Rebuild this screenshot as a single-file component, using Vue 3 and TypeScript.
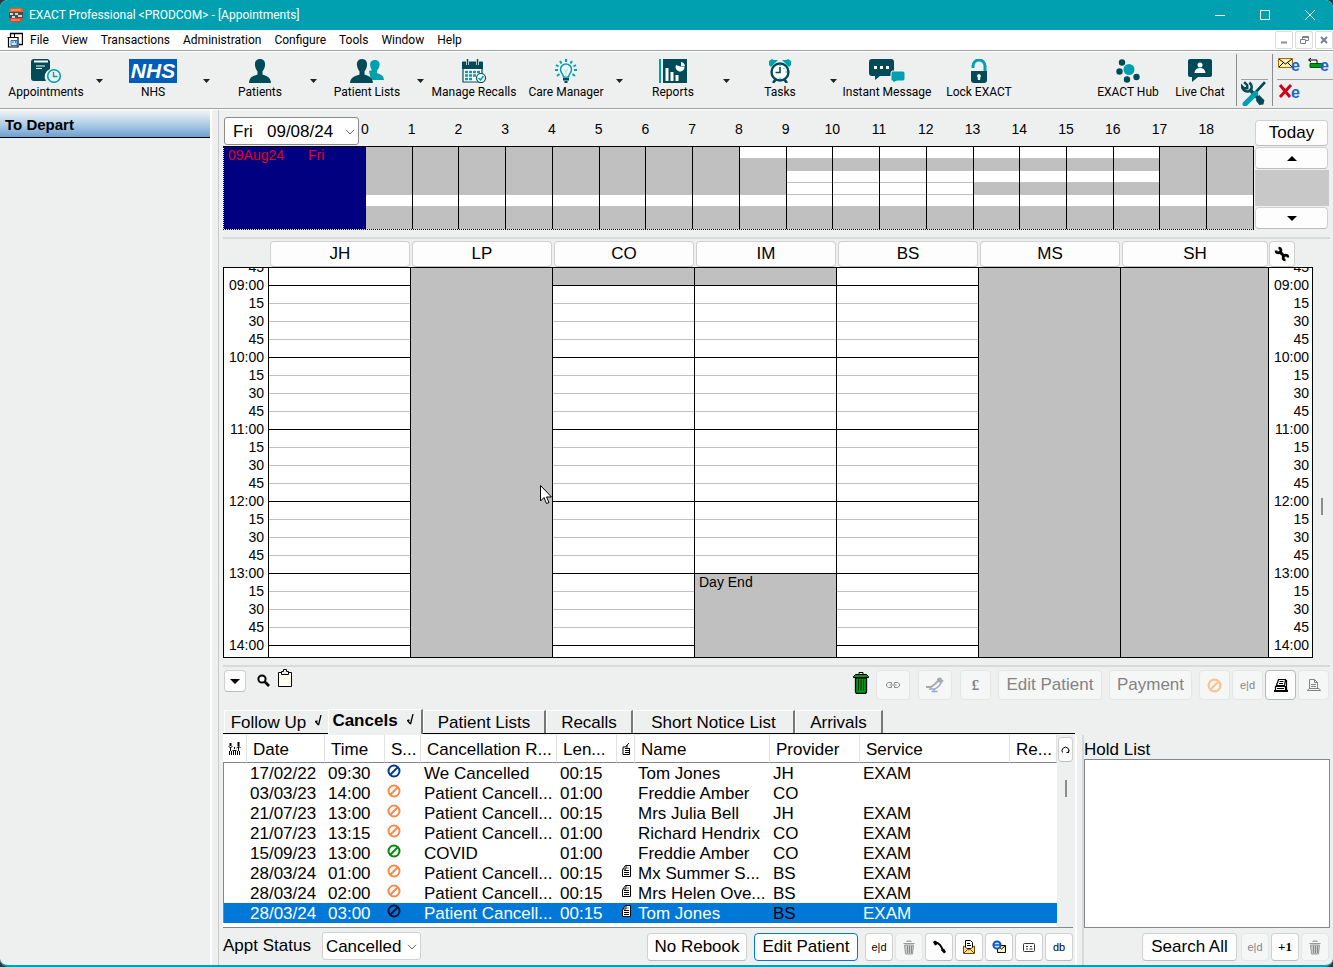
<script setup lang="ts">
import { ref } from 'vue'

interface Tool {
  label: string
  icon: string
  menu?: boolean
}
interface Provider {
  code: string
  from: number
  to: number
  day: [number, number]
}
interface Cancel {
  date: string
  time: string
  tone: string
  reason: string
  length: string
  note: boolean
  name: string
  provider: string
  service: string
}

const menus = ['File', 'View', 'Transactions', 'Administration', 'Configure', 'Tools', 'Window', 'Help']

const tools: Tool[] = [
  { label: 'Appointments', icon: 'book', menu: true },
  { label: 'NHS', icon: 'nhs', menu: true },
  { label: 'Patients', icon: 'person', menu: true },
  { label: 'Patient Lists', icon: 'people', menu: true },
  { label: 'Manage Recalls', icon: 'calendar' },
  { label: 'Care Manager', icon: 'bulb', menu: true },
  { label: 'Reports', icon: 'report', menu: true },
  { label: 'Tasks', icon: 'alarm', menu: true },
  { label: 'Instant Message', icon: 'message' },
  { label: 'Lock EXACT', icon: 'lock' },
]

const hours = Array.from({ length: 19 }, (_, i) => i)

// from/to: first and last open slot in the visible diary; day: open hours in the day overview
const providers: Provider[] = [
  { code: 'JH', from: 0, to: 99, day: [8, 17] },
  { code: 'LP', from: 0, to: 0, day: [0, 0] },
  { code: 'CO', from: 1, to: 99, day: [9, 17] },
  { code: 'IM', from: 1, to: 17, day: [9, 13] },
  { code: 'BS', from: 0, to: 99, day: [0, 24] },
  { code: 'MS', from: 0, to: 0, day: [0, 0] },
  { code: 'SH', from: 0, to: 0, day: [0, 0] },
]

// quarter-hour slots from 08:45; the last one fills what is left of the column
const slots = Array.from({ length: 23 }, (_, i) => i)
const slotLabels = slots.slice(0, 22).map((i) => {
  const minutes = 8 * 60 + 45 + i * 15
  const m = minutes % 60
  return m === 0 ? `${String(minutes / 60).padStart(2, '0')}:00` : String(m)
})

function isOpen(p: Provider, i: number): boolean {
  return i >= p.from && i < p.to
}
function slotClass(p: Provider, i: number) {
  const edge = isOpen(p, i) || isOpen(p, i + 1)
  return { off: !isOpen(p, i), hour: edge && i % 4 === 0 }
}

const tabs = [
  { label: 'Follow Up', tick: true, cls: 't1' },
  { label: 'Cancels', tick: true, cls: 't2' },
  { label: 'Patient Lists', tick: false, cls: 't3' },
  { label: 'Recalls', tick: false, cls: 't4' },
  { label: 'Short Notice List', tick: false, cls: 't5' },
  { label: 'Arrivals', tick: false, cls: 't6' },
]
const activeTab = ref('Cancels')

const cancels: Cancel[] = [
  { date: '17/02/22', time: '09:30', tone: 'navy', reason: 'We Cancelled', length: '00:15', note: false, name: 'Tom Jones', provider: 'JH', service: 'EXAM' },
  { date: '03/03/23', time: '14:00', tone: 'orange', reason: 'Patient Cancell...', length: '01:00', note: false, name: 'Freddie Amber', provider: 'CO', service: '' },
  { date: '21/07/23', time: '13:00', tone: 'orange', reason: 'Patient Cancell...', length: '00:15', note: false, name: 'Mrs Julia Bell', provider: 'JH', service: 'EXAM' },
  { date: '21/07/23', time: '13:15', tone: 'orange', reason: 'Patient Cancell...', length: '01:00', note: false, name: 'Richard Hendrix', provider: 'CO', service: 'EXAM' },
  { date: '15/09/23', time: '13:00', tone: 'green', reason: 'COVID', length: '01:00', note: false, name: 'Freddie Amber', provider: 'CO', service: 'EXAM' },
  { date: '28/03/24', time: '01:00', tone: 'orange', reason: 'Patient Cancell...', length: '00:15', note: true, name: 'Mx Summer S...', provider: 'BS', service: 'EXAM' },
  { date: '28/03/24', time: '02:00', tone: 'orange', reason: 'Patient Cancell...', length: '00:15', note: true, name: 'Mrs Helen Ove...', provider: 'BS', service: 'EXAM' },
  { date: '28/03/24', time: '03:00', tone: 'dark', reason: 'Patient Cancell...', length: '00:15', note: true, name: 'Tom Jones', provider: 'BS', service: 'EXAM' },
]
const selected = ref(7)
</script>

<template>
  <div class="app">
    <svg class="defs" aria-hidden="true">
      <symbol id="i-book" viewBox="0 0 32 24">
        <path d="M4 0h14l2 2v8a8 8 0 0 0-4 12H4a3 3 0 0 1-3-3V3a3 3 0 0 1 3-3z" fill="#004b57" />
        <path d="M4 1.500h14v2H4z" fill="#fff" /><path d="M6 7h9M6 9.500h6" stroke="#fff" />
        <circle cx="24" cy="17" r="6.300" fill="#eef0f0" stroke="#00a0b0" stroke-width="1.600" />
        <path d="M23.500 13v4.500h4" fill="none" stroke="#00a0b0" stroke-width="1.400" />
      </symbol>
      <symbol id="i-person" viewBox="0 0 24 24">
        <path d="M12 0c4 0 5.500 3 5 6.500-.4 3-1.500 4.500-2.500 6v3c3 1.500 8 1.500 8.500 8.500H1c.5-7 5.500-7 8.500-8.500v-3C8.500 11 7.400 9.500 7 6.500 6.500 3 8 0 12 0z" fill="#004b57" />
      </symbol>
      <symbol id="i-people" viewBox="0 0 34 24">
        <path d="M25 1c3.500 0 5 2.500 4.500 5.500-.3 2.500-1.500 4-2.500 5v2.500c3 1.500 6.500 1.500 7 7H21l-2-9 3-1c-1-1-1.500-2-1.800-4.500C19.800 3.500 21 1 25 1z" fill="#00a0b0" />
        <path d="M12 0c4 0 5.500 3 5 6.500-.4 3-1.500 4.500-2.500 6v3c3 1.500 8 1.500 8.500 8.500H0c.5-7 6.500-7 9.500-8.500v-3C8.500 11 7.400 9.500 7 6.500 6.500 3 8 0 12 0z" fill="#004b57" />
      </symbol>
      <symbol id="i-calendar" viewBox="0 0 24 24">
        <path d="M1 3h19v20H1z" fill="#fff" stroke="#004b57" stroke-width="1.200" />
        <path d="M0 3h21v7H0z" fill="#004b57" />
        <path d="M5.500 0v6M15.500 0v6" stroke="#eef0f0" stroke-width="3" /><path d="M5.500 0v6M15.500 0v6" stroke="#004b57" stroke-width="1.500" />
        <path d="M3 13h3M7 13h3M11 13h3M15 13h3M3 16.500h3M7 16.500h3M11 16.500h3M3 20h3M7 20h3" stroke="#00a0b0" stroke-width="2.400" />
        <circle cx="19" cy="19" r="4.500" fill="#fff" stroke="#004b57" stroke-width="1.200" />
        <path d="M16.500 19l2 2 3-4" fill="none" stroke="#00a0b0" stroke-width="1.600" />
      </symbol>
      <symbol id="i-bulb" viewBox="0 0 24 24">
        <path d="M12 0v3M6 2l1.500 2.500M18 2l-1.500 2.500M2 6l2.500 1.500M22 6l-2.500 1.500M1 11h3M20 11h3M3 17l2.500-2M21 17l-2.500-2" stroke="#00a0b0" stroke-width="2" />
        <path d="M9.500 18c0-3-3-4-3-7.500a5.500 5.500 0 0 1 11 0c0 3.500-3 4.500-3 7.500z" fill="#f6ffff" stroke="#00a0b0" stroke-width="1.500" />
        <path d="M10 10l2 3 2-3M12 13v5" fill="none" stroke="#a9dde2" />
        <path d="M9 19h6v2.500H9zM10.500 22h3v2h-3z" fill="#004b57" />
      </symbol>
      <symbol id="i-report" viewBox="0 0 28 24">
        <path d="M1 0v24" stroke="#00a0b0" stroke-width="2" /><path d="M4 0h24v24H4z" fill="#004b57" />
        <path d="M8 22V9M13 22v-9M18 22v-6" stroke="#fff" stroke-width="3" />
        <path d="M21.500 3v4.500H25.500A4.500 4.500 0 1 1 17 6l4.500 1.500z" fill="#fff" /><path d="M22 3a5 5 0 0 1 4 4h-4z" fill="#fff" />
      </symbol>
      <symbol id="i-alarm" viewBox="0 0 24 24">
        <path d="M1 6V2l3-2 2 1 4 0L3 8zM23 6V2l-3-2-2 1-4 0 7 7z" fill="#00a0b0" />
        <path d="M5 24l3-4M19 24l-3-4" stroke="#004b57" stroke-width="2.600" />
        <circle cx="12" cy="13" r="8.500" fill="#fff" stroke="#004b57" stroke-width="2.400" />
        <path d="M12 8v5.500H7.500" fill="none" stroke="#004b57" stroke-width="1.600" />
        <path d="M12 5.500v1.500M19 13h-1.500M12 20v-1.500M16.500 9l-1 1" stroke="#00a0b0" />
      </symbol>
      <symbol id="i-message" viewBox="0 0 36 24">
        <path d="M3 0h19a3 3 0 0 1 3 3v11a3 3 0 0 1-3 3H11l-5 4v-4H3a3 3 0 0 1-3-3V3a3 3 0 0 1 3-3z" fill="#004b57" />
        <path d="M5 7h3v3H5zM11 7h3v3h-3zM17 7h3v3h-3z" fill="#fff" />
        <path d="M23 12h11a2 2 0 0 1 2 2v6a2 2 0 0 1-2 2h-6l-4 2v-2h-2V14z" fill="#00a0b0" stroke="#eef0f0" />
      </symbol>
      <symbol id="i-lock" viewBox="0 0 16 24">
        <path d="M2 9V7a6 6 0 0 1 12 0v5" fill="none" stroke="#00a0b0" stroke-width="3" />
        <path d="M0 12h16v9a3 3 0 0 1-3 3H3a3 3 0 0 1-3-3z" fill="#004b57" />
        <path d="M8 15a2 2 0 0 1 1.200 3.500V21H6.800v-2.500A2 2 0 0 1 8 15z" fill="#fff" />
      </symbol>
      <symbol id="i-hub" viewBox="0 0 24 24">
        <circle cx="13" cy="10.500" r="5.500" fill="#00a0b0" />
        <g fill="#004b57"><circle cx="6" cy="3.500" r="3.200" /><circle cx="3.500" cy="12.500" r="3.200" /><circle cx="11" cy="20.500" r="3.200" /><circle cx="20.500" cy="18" r="3.200" /></g>
      </symbol>
      <symbol id="i-chat" viewBox="0 0 24 24">
        <path d="M2 0h20a2 2 0 0 1 2 2v14a2 2 0 0 1-2 2H10l-6 5v-5H2a2 2 0 0 1-2-2V2a2 2 0 0 1 2-2z" fill="#004b57" />
        <circle cx="12" cy="6" r="2.500" fill="#fff" /><path d="M6.500 14c.5-4 3-5 5.500-5s5 1 5.500 5z" fill="#fff" />
      </symbol>
      <symbol id="i-tools" viewBox="0 0 24 24">
        <path d="M23 1L14 11" stroke="#004b57" stroke-width="2.600" />
        <path d="M8 8l8 8" stroke="#004b57" stroke-width="3.500" />
        <path d="M14.500 16l3-2.500 5 5-1 4-4 .5-3-4z" fill="#004b57" />
        <path d="M3 1l3 3v3L3 7 1 5a5 5 0 0 0 8 4c2-2 1.500-6-1-7.500" fill="none" stroke="#004b57" stroke-width="2.400" />
        <path d="M14 12L4 22" stroke="#00a0b0" stroke-width="5" stroke-linecap="round" />
      </symbol>
      <symbol id="i-mail" viewBox="0 0 22 14">
        <path d="M.5 1.500h14v9H.5z" fill="#fff3b0" stroke="#b06a00" /><path d="M1 2l6.500 5L14 2M1 10l4-4M14 10l-4-4" fill="none" stroke="#000" />
      </symbol>
      <symbol id="i-send" viewBox="0 0 22 14">
        <path d="M3 6.500h13v4H3z" fill="#009a10" stroke="#045c08" /><path d="M10 7V3H2M4 1L1.500 3 4 5" fill="none" stroke="#000" />
      </symbol>
      <symbol id="i-stop" viewBox="0 0 22 14">
        <path d="M2 1l10 12M13 1L2 13" stroke="#d0021b" stroke-width="3" />
      </symbol>
      <symbol id="i-no" viewBox="0 0 14 14">
        <circle cx="7" cy="7" r="5.500" fill="none" stroke="currentColor" stroke-width="2" /><path d="M3.500 10.500l7-7" stroke="currentColor" stroke-width="2" />
      </symbol>
      <symbol id="i-note" viewBox="0 0 9 12">
        <path d="M3.500 .5h5v11h-8v-7z" fill="#fff" stroke="#000" /><path d="M2 5.500h5M2 7.500h5M2 9.500h5M4 .5v3.500H1M6 2.500v1" fill="none" stroke="#000" />
      </symbol>
      <symbol id="i-notehead" viewBox="0 0 8 12">
        <path d="M7 0L3.500 4H1v7.500h6.500V5M3 5.500h4M3 7.500h4M3 9.500h4M5 2v3" fill="none" stroke="#000" />
      </symbol>
      <symbol id="i-wrench" viewBox="0 0 16 16">
        <path d="M5 5l6 6" stroke="#000" stroke-width="3" />
        <path d="M4.500 2a2.500 2.500 0 1 1-2.500 2.500M11.500 14a2.500 2.500 0 1 1 2.500-2.500" fill="none" stroke="#000" stroke-width="2.600" />
      </symbol>
      <symbol id="i-search" viewBox="0 0 13 13">
        <circle cx="5" cy="5" r="3.600" fill="#fff" stroke="#000" stroke-width="2" /><path d="M7.500 7.500l4.500 4.500" stroke="#000" stroke-width="2.600" />
      </symbol>
      <symbol id="i-clipboard" viewBox="0 0 14 18">
        <path d="M.5 3.500h13v14H.5z" fill="#fffef0" stroke="#000" /><path d="M3.500 2.500h2v-2h3v2h2v3h-7z" fill="#eee" stroke="#000" />
      </symbol>
      <symbol id="i-bin" viewBox="0 0 16 22">
        <path d="M6 2.500v-2h4v2" fill="none" stroke="#000" /><path d="M.5 5.500v-1l2-2h11l2 2v1z" fill="#009a10" stroke="#000" />
        <path d="M2.500 6h11v14l-1 1.500h-9l-1-1.500z" fill="#009a10" stroke="#000" stroke-width="1.300" /><path d="M5.500 7.500v11M8 7.500v11M10.500 7.500v11" stroke="#002a04" />
      </symbol>
      <symbol id="i-graybin" viewBox="0 0 12 15">
        <path d="M4 2V1h4v1M.5 3.500h11M1.500 5h9l-1 9h-7z" fill="#ccc" stroke="#999" /><path d="M4.500 6v7M6.500 6v7M8.500 6v7" stroke="#888" />
      </symbol>
      <symbol id="i-link" viewBox="0 0 14 8">
        <path d="M5.500 6.500h-3l-2-1.500V3l2-1.500h3M8.500 1.500h3l2 1.500v2l-2 1.500h-3M3.500 4h7M5.500 1.500v1.500M8.500 1.500v1.500M5.500 5v1.500M8.500 5v1.500" fill="none" stroke="#888" />
      </symbol>
      <symbol id="i-chair" viewBox="0 0 18 16">
        <path d="M0 10h5l4-3 3-3" fill="none" stroke="#aaa" stroke-width="1.800" /><circle cx="13.500" cy="3" r="2.500" fill="#a8a8a8" />
        <path d="M3 12h6l4-3 4-6M8 12v3M5.500 14.500h6" fill="none" stroke="#98a4d6" stroke-width="1.500" />
      </symbol>
      <symbol id="i-print" viewBox="0 0 14 13">
        <path d="M2.500 9.500v-9h5l3 3v6M7.500 .5v3h3M4 5.500h5M4 7.500h5M.5 11.500h13l-1.500-2h-10z" fill="none" stroke="currentColor" />
      </symbol>
      <symbol id="i-prints" viewBox="0 0 14 13">
        <path d="M4.500 .5h7l-1 6h-8zM5.500 2.500h4M5 4.500h4M1.500 7.500h10v4h-10zM3 9.500h7M12.500 1v10h1" fill="#fff" stroke="#000" stroke-width="1.200" /><path d="M0 12h14" stroke="#000" stroke-width="2" />
      </symbol>
      <symbol id="i-phone" viewBox="0 0 14 14">
        <path d="M3 3C7 2 10 7 11 11" fill="none" stroke="#000" stroke-width="2" /><path d="M1 2l2-1.500 3 2L4.500 5 3 5.500zM9 10l3-1.500 2 3.500-2 1.500z" fill="#000" />
      </symbol>
      <symbol id="i-letter" viewBox="0 0 14 14">
        <path d="M3.500 .5h5l2 2v6h-7z" fill="#fff" stroke="#000" /><path d="M5 3.500h3M5 5.500h4" stroke="#000" /><path d="M1.500 6l5.500 4 5.500-4v7.500h-11zM2 13l3.500-3.500M12 13L8.500 9.500" fill="#ffe08a" stroke="#6d4a00" />
      </symbol>
      <symbol id="i-email" viewBox="0 0 14 14">
        <path d="M5.500 5.500h8v7h-8z" fill="#fff0b0" stroke="#000" /><path d="M6 6l3.500 3L13 6" fill="none" stroke="#000" />
        <circle cx="5" cy="5" r="3.600" fill="#c8e4ff" stroke="#1058b8" stroke-width="2" /><path d="M2 5h6" stroke="#1058b8" stroke-width="1.500" />
      </symbol>
      <symbol id="i-sms" viewBox="0 0 12 9">
        <rect x=".5" y=".5" width="11" height="8" rx="1" fill="#fff" stroke="#333" /><path d="M3 3.500h2M7 3.500h2M3 6h2M6.500 6h3" stroke="#333" />
      </symbol>
      <symbol id="i-family" viewBox="0 0 13 13">
        <path d="M2.500 1v3M10.500 0v4" stroke="#000" stroke-width="2" /><path d="M.5 4.500l2 1 2-1M2.500 5v4M1.500 9v4M3.500 9v4M6.500 5v2M4.500 8.500h4M5.500 9v4M7.500 9v4M8.500 6l2-1.500 2 1M10.500 5v4M9.500 9v4M11.500 9v4" fill="none" stroke="#000" />
      </symbol>
      <symbol id="i-tick" viewBox="0 0 7 11">
        <path d="M6 0L3.500 10M3.500 10L.5 6.500l2-.5" fill="none" stroke="#000" stroke-width="1.300" />
      </symbol>
      <symbol id="i-chevron" viewBox="0 0 10 6">
        <path d="M1 .8L5 5 9 .8" fill="none" stroke="#666" />
      </symbol>
      <symbol id="i-up" viewBox="0 0 10 5"><path d="M0 5h10L5 0z" fill="#000" /></symbol>
      <symbol id="i-down" viewBox="0 0 10 5"><path d="M0 0h10L5 5z" fill="#000" /></symbol>
    </svg>

    <header class="titlebar">
      <svg class="logo" viewBox="0 0 16 16">
        <path d="M1 2c3-2 11-2 14 0v3H1z" fill="#e2602a" /><path d="M1 5h14v6H1z" fill="#4a4a52" /><path d="M1 11h14l-1 3c-3 2-9 2-12 0z" fill="#d9492a" />
        <path d="M2 6h3v2H2zM7 6h3v2H7zM4 9h3v2H4zM10 8h4v2h-4z" fill="#d9d4d4" /><path d="M3 3h10M3 13h9" stroke="#f7b183" />
      </svg>
      <span class="title">EXACT Professional &lt;PRODCOM&gt; - [Appointments]</span>
      <div class="winbtns">
        <button type="button" aria-label="Minimise"><svg width="10" height="10"><path d="M0 5.500h10" stroke="#fff" /></svg></button>
        <button type="button" aria-label="Maximise"><svg width="10" height="10"><path d="M.5 .5h9v9h-9z" fill="none" stroke="#fff" /></svg></button>
        <button type="button" aria-label="Close"><svg width="10" height="10"><path d="M0 0l10 10M10 0L0 10" stroke="#fff" /></svg></button>
      </div>
    </header>

    <nav class="menubar">
      <svg class="docicon" viewBox="0 0 16 16">
        <path d="M3.500 5V1.500h12v11H12" fill="#fff" stroke="#000" stroke-width="1.300" /><path d="M.5 5.500h10.500v9.500H1.500V6" fill="#fff" stroke="#000" stroke-width="1.200" /><path d="M7.500 1v4" stroke="#000" />
        <path d="M4 8.500h6v5H4z" fill="#cfe6fb" stroke="#1976d2" /><path d="M5.500 10h1M8 10h1" stroke="#000" />
      </svg>
      <button v-for="m in menus" :key="m" type="button" class="menu">{{ m }}</button>
      <div class="mdi">
        <button type="button" aria-label="Minimise document"><svg width="8" height="8"><path d="M1 6.500h6" stroke="#8a8f96" stroke-width="2" /></svg></button>
        <button type="button" aria-label="Restore document"><svg width="9" height="8"><path d="M.5 3.500h5v4h-5zM2.500 3V.5h6v4H6M3 1.500h5" fill="none" stroke="#7b8088" /></svg></button>
        <button type="button" aria-label="Close document"><svg width="8" height="8"><path d="M1 1l6 6M7 1L1 7" stroke="#7b8088" stroke-width="2" /></svg></button>
      </div>
    </nav>

    <div class="toolbar">
      <template v-for="t in tools" :key="t.label">
        <button type="button" class="tool">
          <span v-if="t.icon === 'nhs'" class="nhs">NHS</span>
          <svg v-else :class="['ticon', t.icon]"><use :href="'#i-' + t.icon" /></svg>
          <span>{{ t.label }}</span>
        </button>
        <button v-if="t.menu" type="button" class="drop" :aria-label="t.label + ' menu'">
          <svg width="7" height="4"><path d="M0 0h7L3.500 4z" fill="#222" /></svg>
        </button>
      </template>
      <button type="button" class="tool narrow push"><svg class="ticon"><use href="#i-hub" /></svg><span>EXACT Hub</span></button>
      <button type="button" class="tool narrow"><svg class="ticon"><use href="#i-chat" /></svg><span>Live Chat</span></button>
      <div class="toolcell">
        <span class="half"></span>
        <button type="button" class="half" aria-label="Tools"><svg width="25" height="25"><use href="#i-tools" /></svg></button>
      </div>
      <div class="toolcell wide">
        <span class="half pair">
          <button type="button" class="web" aria-label="E-mail"><svg width="22" height="14"><use href="#i-mail" /></svg><b>e</b></button>
          <button type="button" class="web" aria-label="Send"><svg width="22" height="14"><use href="#i-send" /></svg><b>e</b></button>
        </span>
        <span class="half pair"><button type="button" class="web" aria-label="Stop"><svg width="22" height="14"><use href="#i-stop" /></svg><b>e</b></button></span>
      </div>
    </div>

    <div class="body">
      <aside class="side"><h2>To Depart</h2></aside>
      <main class="main">
        <section class="overview">
          <label class="combo date">
            <select aria-label="Date"><option>Fri&nbsp;&nbsp;&nbsp;09/08/24</option></select>
            <svg width="10" height="6"><use href="#i-chevron" /></svg>
          </label>
          <div class="hours"><div v-for="h in hours" :key="h" class="hcell"><span>{{ h }}</span></div></div>
          <button type="button" class="btn today">Today</button>
          <div class="strip">
            <div class="dayname"><span>09Aug24</span><span>Fri</span></div>
            <div v-for="h in hours" :key="h" class="hourcol">
              <i v-for="p in providers" :key="p.code" :class="{ open: h >= p.day[0] && h < p.day[1] }"></i>
            </div>
          </div>
          <div class="dayscroll">
            <button type="button" class="btn" aria-label="Previous day"><svg width="10" height="5"><use href="#i-up" /></svg></button>
            <span></span>
            <button type="button" class="btn" aria-label="Next day"><svg width="10" height="5"><use href="#i-down" /></svg></button>
          </div>
        </section>

        <section class="diary">
          <div class="cols heads">
            <span></span>
            <button v-for="p in providers" :key="p.code" type="button" class="btn">{{ p.code }}</button>
            <button type="button" class="btn wrench" aria-label="Set up columns"><svg width="16" height="16"><use href="#i-wrench" /></svg></button>
          </div>
          <div class="cols grid">
            <div class="times"><span v-for="(l, i) in slotLabels" :key="i">{{ l }}</span></div>
            <div v-for="p in providers" :key="p.code" class="pcol">
              <div v-for="i in slots" :key="i" class="slot" :class="slotClass(p, i)">
                <template v-if="p.code === 'IM' && i === 17">Day End</template>
              </div>
            </div>
            <div class="times right"><span v-for="(l, i) in slotLabels" :key="i">{{ l }}</span></div>
          </div>
          <span class="thumb"></span>
          <svg class="pointer" width="12" height="19" viewBox="0 0 12 19"><path d="M.5 .5v15.500l3.500-3.500 2.500 6 2.500-1-2.500-5.500h5z" fill="#fff" stroke="#000" /></svg>
        </section>

        <section class="actions">
          <button type="button" class="btn tiny" aria-label="Options"><svg width="10" height="5"><use href="#i-down" /></svg></button>
          <button type="button" class="bare" aria-label="Search"><svg width="13" height="13"><use href="#i-search" /></svg></button>
          <button type="button" class="bare clip" aria-label="Clipboard"><svg width="14" height="18"><use href="#i-clipboard" /></svg></button>
          <button type="button" class="bare bin" aria-label="Delete"><svg width="16" height="22"><use href="#i-bin" /></svg></button>
          <button type="button" class="btn w34" disabled aria-label="Link"><svg width="14" height="8"><use href="#i-link" /></svg></button>
          <button type="button" class="btn w34" disabled aria-label="Chair"><svg width="18" height="16"><use href="#i-chair" /></svg></button>
          <button type="button" class="btn w31 pound" disabled>£</button>
          <button type="button" class="btn w104" disabled>Edit Patient</button>
          <button type="button" class="btn w83" disabled>Payment</button>
          <div class="group">
            <button type="button" class="btn w31 amber" disabled aria-label="Cancel appointment"><svg width="15" height="15"><use href="#i-no" /></svg></button>
            <button type="button" class="btn w31 small" disabled>e|d</button>
            <button type="button" class="btn w31 strong" aria-label="Print all"><svg width="14" height="13"><use href="#i-prints" /></svg></button>
            <button type="button" class="btn w31" disabled aria-label="Print"><svg width="14" height="13"><use href="#i-print" /></svg></button>
          </div>
        </section>

        <div class="lower">
          <section class="lists">
            <div class="tabs" role="tablist">
              <button v-for="t in tabs" :key="t.label" type="button" role="tab" :class="['tab', t.cls, { active: t.label === activeTab }]" :aria-selected="t.label === activeTab" @click="activeTab = t.label">
                {{ t.label }}<svg v-if="t.tick" width="7" height="11"><use href="#i-tick" /></svg>
              </button>
            </div>
            <div class="panel">
              <div class="tablewrap">
                <table>
                  <colgroup><col class="c24" /><col class="c78" /><col class="c60" /><col class="c36" /><col class="c136" /><col class="c60" /><col class="c18" /><col class="c135" /><col class="c90" /><col class="c150" /><col /></colgroup>
                  <thead>
                    <tr>
                      <th class="ic"><svg width="13" height="13"><use href="#i-family" /></svg></th>
                      <th>Date</th><th>Time</th><th>S...</th><th>Cancellation R...</th><th>Len...</th>
                      <th class="ic"><svg width="8" height="12"><use href="#i-notehead" /></svg></th>
                      <th>Name</th><th>Provider</th><th>Service</th><th>Re...</th>
                    </tr>
                  </thead>
                  <tbody>
                    <tr v-for="(c, i) in cancels" :key="i" :class="{ sel: i === selected }" @click="selected = i">
                      <td></td><td>{{ c.date }}</td><td>{{ c.time }}</td>
                      <td :class="['status', c.tone]"><svg width="14" height="14"><use href="#i-no" /></svg></td>
                      <td>{{ c.reason }}</td><td>{{ c.length }}</td>
                      <td class="notecell"><svg v-if="c.note" width="9" height="12"><use href="#i-note" /></svg></td>
                      <td>{{ c.name }}</td><td class="prov">{{ c.provider }}</td><td>{{ c.service }}</td><td></td>
                    </tr>
                  </tbody>
                </table>
                <div class="vscroll">
                  <button type="button" class="btn" aria-label="Refresh"><svg width="9" height="9"><path d="M1.500 7.500a3.500 3.500 0 1 1 6 0M5.500 7.500h2V5.500" fill="none" stroke="#000" /></svg></button>
                  <span></span>
                </div>
              </div>
              <div class="footer">
                <label for="status">Appt Status</label>
                <span class="combo status-combo">
                  <select id="status"><option>Cancelled</option></select>
                  <svg width="10" height="6"><use href="#i-chevron" /></svg>
                </span>
                <button type="button" class="btn w100 push">No Rebook</button>
                <button type="button" class="btn w104 focus">Edit Patient</button>
                <div class="group iconset">
                  <button type="button" class="btn small">e|d</button>
                  <button type="button" class="btn" disabled aria-label="Delete"><svg width="12" height="15"><use href="#i-graybin" /></svg></button>
                  <button type="button" class="btn" aria-label="Phone"><svg width="14" height="14"><use href="#i-phone" /></svg></button>
                  <button type="button" class="btn" aria-label="Letter"><svg width="14" height="14"><use href="#i-letter" /></svg></button>
                  <button type="button" class="btn" aria-label="E-mail patient"><svg width="14" height="14"><use href="#i-email" /></svg></button>
                  <button type="button" class="btn" aria-label="Text message"><svg width="12" height="9"><use href="#i-sms" /></svg></button>
                  <button type="button" class="btn small">db</button>
                </div>
              </div>
            </div>
          </section>
          <section class="hold">
            <h3>Hold List</h3>
            <div class="holdbox"></div>
            <div class="footer">
              <button type="button" class="btn w95 push">Search All</button>
              <div class="group iconset">
                <button type="button" class="btn small" disabled>e|d</button>
                <button type="button" class="btn plus">+1</button>
                <button type="button" class="btn" disabled aria-label="Remove"><svg width="12" height="15"><use href="#i-graybin" /></svg></button>
              </div>
            </div>
          </section>
        </div>
      </main>
    </div>
  </div>
</template>

<style>
body { margin: 0; background: #2b3a3d; }
</style>

<style scoped>
* { box-sizing: border-box; }
.app { display: flex; flex-direction: column; height: 100vh; min-height: 720px; background: #eef0f0; border-bottom: 2px solid #00a0b0; border-radius: 8px; overflow: hidden; font-family: "Liberation Sans", Arial, sans-serif; font-size: 17px; color: #000; }
.defs { position: absolute; width: 0; height: 0; }
button { font: inherit; color: inherit; padding: 0; margin: 0; border: 0; background: none; white-space: nowrap; }
svg { display: block; flex: none; }

.titlebar { display: flex; align-items: center; height: 30px; flex: none; background: #00a0b0; color: #fff; padding: 0 1px 0 8px; font-family: Roboto, "Open Sans", sans-serif; font-size: 12px; }
.logo { width: 16px; height: 16px; margin-right: 5px; }
.winbtns { display: flex; margin-left: auto; }
.winbtns button { width: 45px; height: 30px; display: grid; place-items: center; }

.menubar { display: flex; align-items: center; gap: 1px; height: 21px; flex: none; background: #fff; border-bottom: 1px solid #a0a0a0; padding-left: 7px; font-family: Roboto, "Open Sans", sans-serif; font-size: 12px; }
.docicon { width: 16px; height: 16px; }
.menu { padding: 0 6px; line-height: 20px; }
.mdi { display: flex; gap: 2px; margin-left: auto; }
.mdi button { width: 18px; height: 18px; border: 1px solid #dcdcdc; border-radius: 2px; display: grid; place-items: center; }

.toolbar { display: flex; height: 58px; flex: none; border-top: 1px solid #fff; border-bottom: 1px solid #a0a0a0; font-family: Roboto, "Open Sans", sans-serif; font-size: 12px; }
.tool { width: 92px; display: flex; flex-direction: column; align-items: center; padding-top: 7px; line-height: 18px; }
.tool.narrow { width: 72px; }
.push { margin-left: auto; }
.ticon { width: 26px; height: 24px; }
.ticon.book { width: 32px; }
.ticon.people { width: 34px; }
.ticon.message { width: 36px; }
.ticon.report { width: 28px; }
.nhs { width: 48px; height: 24px; background: #005eb8; color: #fff; font: italic bold 21px/24px "Liberation Sans", Arial, sans-serif; }
.drop { width: 15px; padding-top: 1px; display: grid; place-items: center; }
.toolcell { width: 36px; margin: 2px 0; border-left: 1px solid #8c8c8c; padding: 0 4px; }
.toolcell.wide { width: 61px; padding-right: 0; }
.half { display: flex; width: 100%; height: 25px; align-items: center; }
.half + .half { border-top: 1px solid #a0a0a0; height: 27px; }
.pair { gap: 7px; padding: 0 0 5px 1px; }
.web { position: relative; }
.web b { position: absolute; right: 0; bottom: -2px; color: #1f64c8; font: bold 16px/14px "Liberation Sans", Arial, sans-serif; }

.body { flex: 1; min-height: 0; display: flex; border-top: 1px solid #fff; }
.side { width: 212px; flex: none; border-right: 2px solid #fff; padding-top: 2px; }
.side h2 { margin: 0; padding-left: 5px; font-size: 15px; line-height: 25px; border-bottom: 1px solid #000; background: linear-gradient(#eaf0f3, #a8c8e4 55%, #6f9fd0); }
.main { flex: 1; min-width: 0; margin-left: 6px; padding: 0 3px 0 4px; border-left: 1px solid #c8caca; display: flex; flex-direction: column; }

.btn { background: #fdfdfd; border: 1px solid #d0d0d0; border-bottom-color: #bcbcbc; border-radius: 4px; display: grid; place-items: center; height: 30px; flex: none; }
.btn:disabled { color: #838383; background: #f5f7f7; border-color: #e4e6e6; }
.combo { position: relative; display: block; }
.combo select { width: 100%; height: 28px; font: inherit; color: #000; appearance: none; background: #fff; border: 1px solid #d0d0d0; border-radius: 3px; padding: 0 3px; }
.combo svg { position: absolute; right: 4px; top: 12px; pointer-events: none; }

.overview { display: grid; grid-template-columns: 142px 1fr 76px; grid-template-rows: 36px 84px; flex: none; padding-bottom: 2px; }
.overview .date { width: 135px; margin: 7px 0 0 1px; }
.overview .date select { border-color: #8a8a8a; padding-left: 8px; }
.hours { display: flex; padding-right: 1px; }
.hcell { flex: 1; min-width: 0; font-size: 14px; line-height: 18px; padding-top: 10px; }
.hcell span { display: block; width: 24px; margin-left: -12px; text-align: center; }
.today { width: 73px; height: 26px; margin: 10px 0 0 1px; }
.strip { grid-column: 1 / 3; display: flex; border: 1px dotted #000; border-top: 1px solid #000; border-right: 1px solid #000; height: 84px; overflow: hidden; }
.dayname { width: 141px; flex: none; background: #000080; color: #e00020; font-size: 14px; line-height: 17px; padding-left: 4px; display: flex; gap: 24px; }
.hourcol { flex: 1; min-width: 0; border-left: 1px solid #000; background: #c0c0c0; }
.hourcol i { display: block; height: 12px; border-bottom: 1px solid #c0c0c0; }
.hourcol i.open { background: #fff; }
.dayscroll { display: flex; flex-direction: column; padding: 1px 0 0 1px; }
.dayscroll .btn { width: 73px; height: 22px; }
.dayscroll span { height: 36px; margin: 1px 0; width: 74px; background: #c8c8c8; }

.diary { position: relative; flex: 1; min-height: 0; display: flex; flex-direction: column; margin-top: 5px; border-top: 2px solid #d8dada; padding: 2px 17px 0 0; }
.cols { display: grid; grid-template-columns: 46px repeat(6, 142fr) 148fr 44px; }
.heads { flex: none; }
.heads .btn { margin-left: 1px; margin-right: 1px; height: 26px; }
.heads .wrench { width: 26px; margin: 0; }
.grid { flex: 1; min-height: 0; overflow: hidden; border: 1px solid #000; border-width: 1px 0; background: #c0c0c0; }
.times { background: #fff; border: 1px solid #000; border-width: 0 1px; padding-right: 4px; font-size: 14px; text-align: right; }
.times.right { border-left: 0; padding-right: 3px; }
.times span { display: block; height: 18px; line-height: 18px; }
.times span:first-child { margin-top: -10px; }
.pcol { display: flex; flex-direction: column; border-right: 1px solid #000; min-width: 0; min-height: 0; }
.slot { flex: none; height: 18px; background: #fff; border-bottom: 1px solid #c0c0c0; font-size: 14px; line-height: 17px; padding-left: 4px; }
.slot.off { background: #c0c0c0; }
.slot.hour { border-bottom-color: #000; }
.slot:last-child { flex: 1 1 0; height: auto; border-bottom: 0; }
.thumb { position: absolute; right: 7px; bottom: 143px; width: 2px; height: 17px; background: #8a8d8d; }
.pointer { position: absolute; left: 317px; top: 246px; }

.actions { flex: none; display: flex; align-items: center; margin-top: 7px; height: 36px; border-top: 2px solid #d8dada; padding: 2px 1px 0; }
.tiny { width: 22px; height: 22px; margin-right: 11px; margin-bottom: 8px; }
.bare { display: grid; place-items: center; margin-bottom: 10px; }
.clip { margin-left: 8px; margin-bottom: 14px; }
.bin { margin: 0 7px 4px auto; }
.w34 { width: 34px; margin-right: 8px; }
.w31 { width: 31px; }
.w83 { width: 83px; }
.w95 { width: 95px; }
.w100 { width: 100px; }
.w104 { width: 104px; }
.pound { font: bold 15px "Liberation Serif", serif; }
.actions .pound, .actions .w104, .actions .w83 { margin-right: 7px; }
.group { display: flex; gap: 2px; }
.small { font-size: 11px; }
.amber:disabled { color: #f8c489; }
.strong { border-color: #b8b8b8; }

.lower { flex: none; display: flex; }
.lists { flex: 1; min-width: 0; }
.panel { border-right: 2px solid #fff; padding-right: 2px; }
.tabs { display: flex; align-items: flex-end; height: 33px; border-bottom: 1px solid #000; margin-right: 2px; padding-left: 1px; }
.tab { height: 23px; display: flex; align-items: center; justify-content: center; gap: 9px; padding-top: 1px; border: 1px solid #fff; border-right: 2px solid #777; border-bottom: 0; }
.tab svg { margin-bottom: 4px; }
.tab.active { height: 25px; margin-bottom: -1px; padding: 0 4px 2px 0; background: #eef0f0; font-weight: bold; }
.t1 { width: 104px; border-right: 0; }
.t2 { width: 95px; }
.t3 { width: 123px; }
.t4 { width: 87px; }
.t5 { width: 162px; }
.t6 { width: 88px; }
.tablewrap { display: flex; margin-top: 1px; background: #fff; border-bottom: 1px solid #828790; }
table { flex: 1; min-width: 0; width: 100%; table-layout: fixed; border-collapse: separate; border-spacing: 0; margin-bottom: 4px; }
th, td { text-align: left; font-weight: normal; white-space: nowrap; overflow: hidden; }
th { height: 28px; padding: 3px 0 0 6px; border-right: 1px solid #e2e2e2; border-bottom: 1px solid #828790; line-height: 20px; }
td { height: 20px; line-height: 18px; padding: 2px 0 0 3px; }
th.ic { padding: 0 0 0 5px; }
td:first-child { border-left: 1px solid #828790; }
.sel td { background: #0078d7; color: #fff; }
.sel td.prov { color: #000; }
.c24 { width: 24px; }
.c78 { width: 78px; }
.c60 { width: 60px; }
.c36 { width: 36px; }
.c136 { width: 136px; }
.c18 { width: 18px; }
.c135 { width: 135px; }
.c90 { width: 90px; }
.c150 { width: 150px; }
td.status { padding: 0 0 0 2px; }
.status svg { margin-bottom: 5px; }
td.notecell { padding-top: 0; }
.notecell svg { margin: 0 0 5px 2px; }
.navy { color: #003a8c; }
.orange { color: #f58a4b; }
.green { color: #008a10; }
.sel td.dark { color: #00103c; }
.vscroll { width: 16px; flex: none; background: #eef0f0; padding-top: 2px; }
.vscroll .btn { width: 15px; height: 25px; margin-left: 1px; }
.vscroll span { display: block; width: 2px; height: 17px; margin: 18px 0 0 8px; background: #8a8d8d; }
.footer { display: flex; align-items: center; height: 37px; padding-top: 1px; }
.footer .btn { height: 28px; }
.status-combo { width: 99px; margin: -2px 0 0 11px; }
.footer label { margin-top: -2px; }
.w100 { margin-right: 7px; }
.footer .focus { border-color: #0078d7; margin-right: 7px; }
.iconset .btn { width: 28px; }
.hold { width: 248px; flex: none; margin-left: 5px; display: flex; flex-direction: column; border-left: 2px solid #d8dada; margin-top: 34px; }
.hold h3 { margin: 0; font-size: 17px; font-weight: normal; line-height: 18px; flex: none; padding-top: 6px; }
.holdbox { flex: 1; background: #fff; border: 1px solid #828790; }
.hold .footer { flex: none; padding-right: 1px; }
.hold .w95 { margin-right: 4px; }
.plus { font: bold 13px "Liberation Serif", serif; }
</style>
